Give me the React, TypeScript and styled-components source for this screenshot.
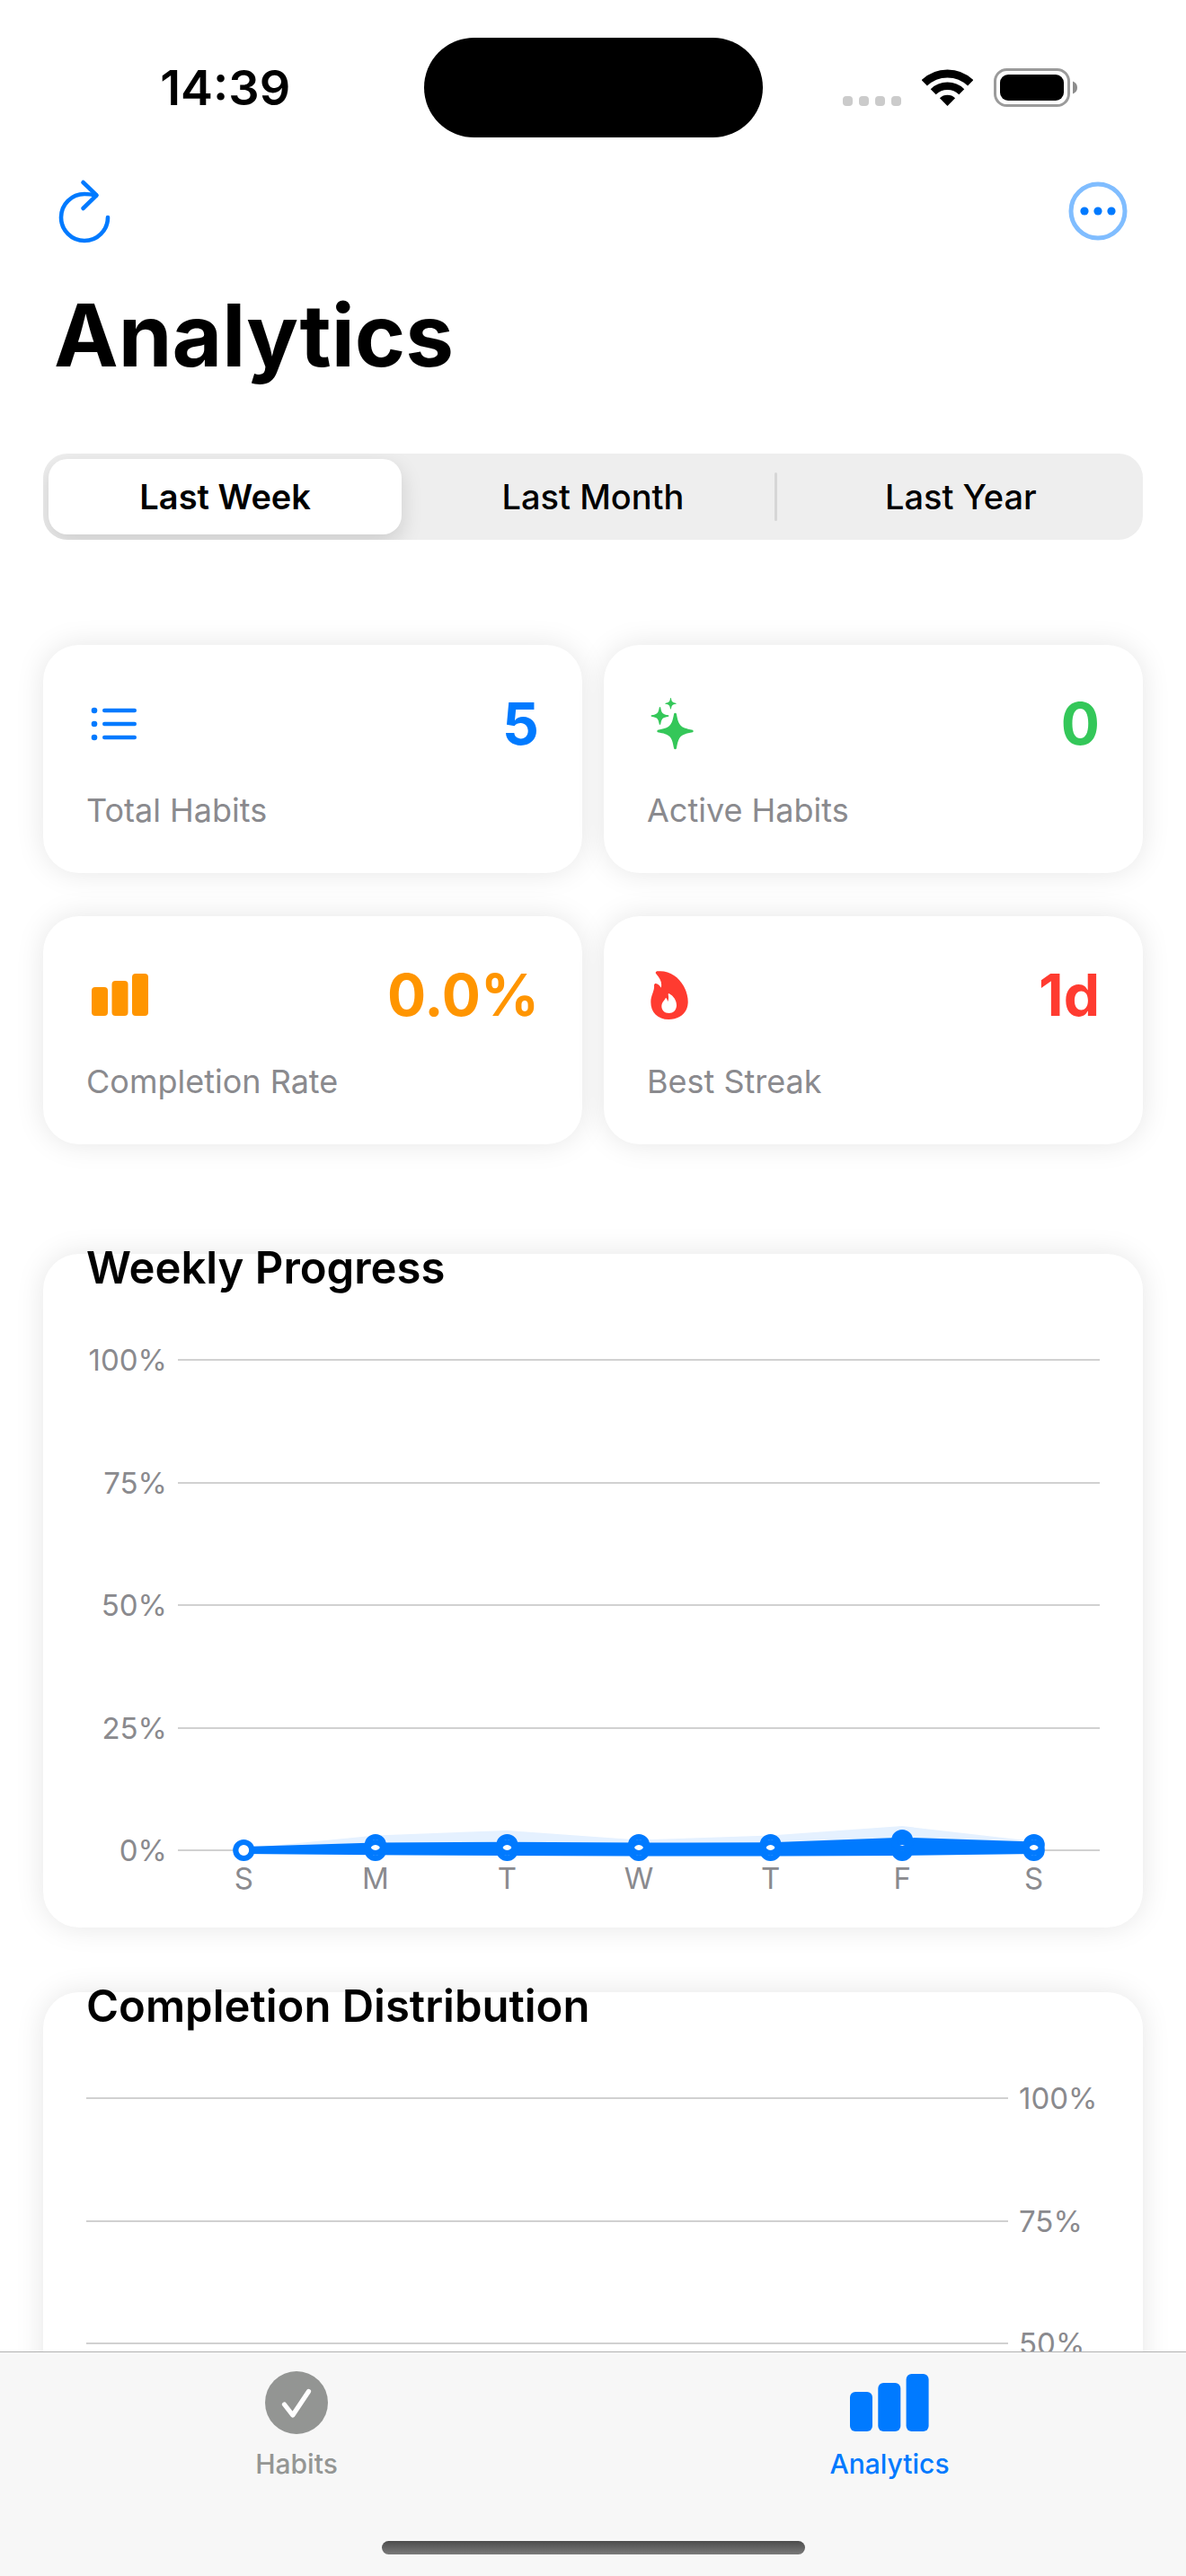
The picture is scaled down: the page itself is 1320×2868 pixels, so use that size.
import React, { useState } from "react";
import styled, { createGlobalStyle } from "styled-components";

const color = {
  blue: "#007aff",
  green: "#34c759",
  orange: "#ff9500",
  red: "#ff3b30",
  grey: "#8a8a8e",
  line: "#d1d1d1",
};

const GlobalStyle = createGlobalStyle`
  *, *::before, *::after { box-sizing: border-box; }
  body {
    margin: 0;
    background: #ffffff;
    color: #000000;
    font-family: Inter, "Liberation Sans", sans-serif;
  }
  h1, h2, p { margin: 0; }
  button {
    border: 0;
    margin: 0;
    padding: 0;
    background: none;
    color: inherit;
    font: inherit;
    cursor: pointer;
  }
  svg { display: block; flex: none; }
`;

const Screen = styled.div`
  display: flex;
  flex-direction: column;
  height: 100vh;
`;

const StatusBar = styled.header`
  display: grid;
  grid-template-columns: 1fr 377px 1fr;
  align-items: center;
  flex: none;
  height: 177px;
  padding-top: 18px;
`;

const Clock = styled.time`
  padding-left: 30px;
  text-align: center;
  font-size: 54px;
  line-height: 60px;
  font-weight: 600;
`;

const Island = styled.div`
  height: 111px;
  border-radius: 56px;
  background: #000000;
`;

const StatusIcons = styled.div`
  display: flex;
  justify-content: center;
  align-items: center;
  gap: 23px;
  padding-right: 32px;
`;

const Content = styled.main`
  flex: 1;
  min-height: 0;
  overflow: hidden;
  padding: 0 48px;
`;

const NavRow = styled.div`
  display: flex;
  justify-content: space-between;
  align-items: center;
  height: 116px;
  padding: 0 16px;
`;

const IconButton = styled.button`
  display: flex;
  color: ${color.blue};
`;

const Title = styled.h1`
  margin-top: 20px;
  padding-left: 12px;
  font-size: 96px;
  line-height: 120px;
  font-weight: 700;
`;

const Segments = styled.div`
  display: flex;
  align-items: center;
  height: 96px;
  margin-top: 72px;
  padding: 6px;
  border-radius: 27px;
  background: #eeeeee;
  overflow: hidden;
`;

const Segment = styled.button<{ $selected: boolean }>`
  flex: 1;
  height: 84px;
  border-radius: 21px;
  font-size: 38px;
  line-height: 48px;
  font-weight: ${(p) => (p.$selected ? 600 : 500)};
  background: ${(p) => (p.$selected ? "#ffffff" : "transparent")};
  box-shadow: ${(p) => (p.$selected ? "0 9px 24px rgba(0, 0, 0, 0.14)" : "none")};
`;

const Divider = styled.span<{ $visible: boolean }>`
  width: 3px;
  height: 54px;
  margin: 0 8px 0 5px;
  border-radius: 2px;
  background: ${(p) => (p.$visible ? "#d6d6d6" : "transparent")};
`;

const Card = styled.section`
  border-radius: 40px;
  background: #ffffff;
  box-shadow: 0 0 32px rgba(0, 0, 0, 0.1);
`;

const StatGrid = styled.div`
  display: grid;
  grid-template-columns: 1fr 1fr;
  gap: 48px 24px;
  margin-top: 117px;
`;

const StatCard = styled(Card)`
  padding: 48px;
`;

const StatTop = styled.div<{ $tint: string }>`
  display: flex;
  justify-content: space-between;
  align-items: center;
  color: ${(p) => p.$tint};
`;

const StatValue = styled.strong`
  font-size: 64px;
  line-height: 79px;
  font-weight: 700;
`;

const StatLabel = styled.p`
  margin-top: 36px;
  font-size: 36px;
  line-height: 43px;
  color: ${color.grey};
`;

const ChartList = styled.div`
  display: grid;
  gap: 72px;
  margin-top: 122px;
`;

const ChartCard = styled(Card)`
  min-height: 750px;
  padding: 0 48px 35px;
`;

const ChartTitle = styled.h2`
  margin: -14px 0 61px;
  font-size: 49px;
  line-height: 60px;
  font-weight: 600;
`;

const ChartRow = styled.div`
  display: flex;
  gap: 12px;
`;

const Ticks = styled.div<{ $align: "left" | "right" }>`
  display: flex;
  flex-direction: column;
  justify-content: space-between;
  flex: none;
  width: 90px;
  font-size: 33px;
  line-height: 22px;
  text-align: ${(p) => p.$align};
  white-space: nowrap;
  color: ${color.grey};
`;

const Plot = styled.div`
  flex: 1;
  min-width: 0;
`;

const PlotSvg = styled.svg`
  width: 100%;
  overflow: visible;
`;

const DayLabels = styled.div`
  display: grid;
  grid-template-columns: repeat(7, 1fr);
  text-align: center;
  font-size: 33px;
  line-height: 40px;
  color: ${color.grey};
`;

const TabBar = styled.footer`
  flex: none;
  height: 250px;
  border-top: 1px solid #b2b2b2;
  background: #f7f7f7;
`;

const Tabs = styled.nav`
  display: grid;
  grid-template-columns: 1fr 1fr;
  padding-top: 21px;
`;

const Tab = styled.button<{ $active: boolean }>`
  display: flex;
  flex-direction: column;
  align-items: center;
  gap: 15px;
  font-size: 30px;
  line-height: 36px;
  font-weight: 500;
  color: ${(p) => (p.$active ? color.blue : "#949694")};
`;

const HomeIndicator = styled.div`
  width: 471px;
  height: 15px;
  margin: 68px auto 0;
  border-radius: 8px;
  background: linear-gradient(#4c4c4c, #7a7a7a);
`;

const SignalIcon = () => (
  <svg width="65" height="43" viewBox="0 0 65 43" fill="#cbcbcb" aria-hidden="true">
    {[0, 18, 36, 54].map((x) => (
      <rect key={x} x={x} y="31" width="11" height="11" rx="4" />
    ))}
  </svg>
);

const WifiIcon = () => (
  <svg width="57" height="43" viewBox="0 0 57 43" aria-hidden="true">
    <g fill="none" stroke="#000000">
      <path d="M2.8 16.3A37 37 0 0 1 54.2 16.3" strokeWidth="9" />
      <path d="M12.7 26.2A22.7 22.7 0 0 1 44.3 26.2" strokeWidth="8.5" />
    </g>
    <path d="M28.5 42L19.9 33.2A12.4 12.4 0 0 1 37.1 33.2Z" />
  </svg>
);

const BatteryIcon = () => (
  <svg width="93" height="43" viewBox="0 0 93 43" aria-hidden="true">
    <rect x="1.5" y="1.5" width="82" height="40" rx="13" fill="none" stroke="#9b9b9b" strokeWidth="3" />
    <rect x="7" y="7" width="71" height="29" rx="9" />
    <path d="M88 14.5Q93 16.500 93 21.500T88 28.500Z" fill="#8c8c8c" />
  </svg>
);

const RefreshIcon = () => (
  <svg
    width="60"
    height="80"
    viewBox="0 0 60 80"
    fill="none"
    stroke="currentColor"
    strokeWidth="4.6"
    strokeLinecap="round"
    strokeLinejoin="round"
    aria-hidden="true"
  >
    <path d="M56 47A26 26 0 1 1 30 21Q36 21 43 22.500" />
    <path d="M28.500 8L43.500 22.400L28.500 37" />
  </svg>
);

const MoreIcon = () => (
  <svg width="68" height="68" viewBox="0 0 68 68" fill="currentColor" aria-hidden="true">
    <circle cx="34" cy="34" r="30" fill="none" stroke="#80bdff" strokeWidth="5" />
    <circle cx="19" cy="34" r="4.600" />
    <circle cx="34" cy="34" r="4.600" />
    <circle cx="49" cy="34" r="4.600" />
  </svg>
);

const ListIcon = () => (
  <svg width="72" height="66" viewBox="0 0 72 66" fill="currentColor" aria-hidden="true">
    {[18, 33, 48].map((y) => (
      <g key={y}>
        <circle cx="9" cy={y} r="3.300" />
        <rect x="18" y={y - 2.3} width="38" height="4.600" rx="2.300" />
      </g>
    ))}
  </svg>
);

const star = (cx: number, cy: number, r: number) => {
  const k = r * 0.3;
  const t = r * 0.07;
  return [
    `M${cx - t} ${cy - r}Q${cx} ${cy - r - t} ${cx + t} ${cy - r}`,
    `C${cx + t + r * 0.12} ${cy - k} ${cx + k} ${cy - t - r * 0.12} ${cx + r} ${cy - t}`,
    `Q${cx + r + t} ${cy} ${cx + r} ${cy + t}`,
    `C${cx + k} ${cy + t + r * 0.12} ${cx + t + r * 0.12} ${cy + k} ${cx + t} ${cy + r}`,
    `Q${cx} ${cy + r + t} ${cx - t} ${cy + r}`,
    `C${cx - t - r * 0.12} ${cy + k} ${cx - k} ${cy + t + r * 0.12} ${cx - r} ${cy + t}`,
    `Q${cx - r - t} ${cy} ${cx - r} ${cy - t}`,
    `C${cx - k} ${cy - t - r * 0.12} ${cx - t - r * 0.12} ${cy - k} ${cx - t} ${cy - r}Z`,
  ].join("");
};

const SparklesIcon = () => (
  <svg width="72" height="66" viewBox="0 0 72 66" fill="currentColor" aria-hidden="true">
    <path d={star(31.5, 41, 19.5)} />
    <path d={star(14.5, 24, 9.6)} />
    <path d={star(26.5, 10.3, 6)} />
  </svg>
);

const BarsIcon = () => (
  <svg width="72" height="66" viewBox="0 0 72 66" fill="currentColor" aria-hidden="true">
    <rect x="6" y="24" width="18" height="32" rx="4" />
    <rect x="28.500" y="17" width="18" height="39" rx="4" />
    <rect x="51" y="9" width="18" height="47" rx="4" />
  </svg>
);

const FlameIcon = () => (
  <svg width="72" height="66" viewBox="60 15 216 198" fill="currentColor" aria-hidden="true">
    <path
      fillRule="evenodd"
      d="M97 34C135 31 165 52 183 84C193 103 198 122 197 140C195 175 168 195 133 195C95 195 73 170 73 137C73 112 86 102 84 80C85 74 91 74 96 77C101 80 104 84 107 89C112 73 104 58 91 43C87 38 90 34 97 34ZM133 108C151 117 160 135 159 150C157 166 148 174 134 174C118 174 109 164 109 150C110 136 120 131 123 122C127 126 129 130 129 136C134 127 132 118 131 110Z"
    />
  </svg>
);

const CheckIcon = () => (
  <svg width="70" height="70" viewBox="0 0 70 70" aria-hidden="true">
    <circle cx="35" cy="35" r="35" fill="#939593" />
    <path
      d="M21.500 37L30.800 49L48.500 22.500"
      fill="none"
      stroke="#ffffff"
      strokeWidth="5.200"
      strokeLinecap="round"
      strokeLinejoin="round"
    />
  </svg>
);

const TabBarsIcon = () => (
  <svg width="88" height="70" viewBox="0 0 88 70" fill="currentColor" aria-hidden="true">
    <rect x="0" y="23" width="25" height="44" rx="6" />
    <rect x="31.300" y="13" width="25" height="54" rx="6" />
    <rect x="62.600" y="3" width="25" height="64" rx="6" />
  </svg>
);

const periods = ["Last Week", "Last Month", "Last Year"];

const stats = [
  { label: "Total Habits", value: "5", tint: color.blue, Icon: ListIcon },
  { label: "Active Habits", value: "0", tint: color.green, Icon: SparklesIcon },
  { label: "Completion Rate", value: "0.0%", tint: color.orange, Icon: BarsIcon },
  { label: "Best Streak", value: "1d", tint: color.red, Icon: FlameIcon },
];

/* Distances in pixels above the 0% line, one entry per weekday */
const week = [
  { day: "S", markers: [0], area: 2, top: 4, bottom: -4 },
  { day: "M", markers: [0, 6], area: 16.5, top: 8.5, bottom: -5.3 },
  { day: "T", markers: [0, 6], area: 22, top: 9.3, bottom: -6 },
  { day: "W", markers: [0, 6], area: 11.5, top: 8.5, bottom: -6.5 },
  { day: "T", markers: [0, 6], area: 16.5, top: 8.8, bottom: -6.5 },
  { day: "F", markers: [0, 5.5, 11], area: 27, top: 14.3, bottom: -6 },
  { day: "S", markers: [0, 6], area: 10, top: 9.5, bottom: -4 },
];

const PLOT_WIDTH = 1026;
const STEP = 136.5;
const EDGE = 11;

const GridLines = ({ count }: { count: number }) => (
  <g stroke={color.line} strokeWidth="2">
    {Array.from({ length: count }, (_, i) => (
      <line key={i} x1="0" x2={PLOT_WIDTH} y1={Math.round(EDGE + i * STEP)} y2={Math.round(EDGE + i * STEP)} />
    ))}
  </g>
);

const WeeklyPlot = () => {
  const base = EDGE + 4 * STEP;
  const x = (i: number) => (PLOT_WIDTH / 7) * (i + 0.5);
  const edge = (key: "area" | "top" | "bottom") => week.map((d, i) => `${x(i)},${base - d[key]}`);
  return (
    <PlotSvg
      height="568"
      viewBox={`0 0 ${PLOT_WIDTH} 568`}
      preserveAspectRatio="none"
      role="img"
      aria-label="Weekly Progress"
    >
      <GridLines count={5} />
      <polygon points={[...edge("area"), ...edge("bottom").reverse()].join(" ")} fill="#e5f1ff" />
      <polygon points={[...edge("top"), ...edge("bottom").reverse()].join(" ")} fill={color.blue} />
      {week.map((d, i) => (
        <g key={i}>
          {d.markers.map((m) => (
            <circle key={m} cx={x(i)} cy={base - m} r="7" fill="#ffffff" />
          ))}
          {d.markers.map((m) => (
            <circle
              key={m}
              cx={x(i)}
              cy={base - m}
              r="9"
              fill="none"
              stroke={color.blue}
              strokeWidth="6.200"
            />
          ))}
        </g>
      ))}
    </PlotSvg>
  );
};

export default function App() {
  const [period, setPeriod] = useState(0);

  return (
    <Screen>
      <GlobalStyle />
      <StatusBar>
        <Clock>14:39</Clock>
        <Island />
        <StatusIcons>
          <SignalIcon />
          <WifiIcon />
          <BatteryIcon />
        </StatusIcons>
      </StatusBar>

      <Content>
        <NavRow>
          <IconButton aria-label="Refresh">
            <RefreshIcon />
          </IconButton>
          <IconButton aria-label="More">
            <MoreIcon />
          </IconButton>
        </NavRow>
        <Title>Analytics</Title>

        <Segments>
          {periods.map((name, i) => (
            <React.Fragment key={name}>
              {i > 0 && <Divider $visible={period !== i && period !== i - 1} />}
              <Segment $selected={period === i} aria-pressed={period === i} onClick={() => setPeriod(i)}>
                {name}
              </Segment>
            </React.Fragment>
          ))}
        </Segments>

        <StatGrid>
          {stats.map(({ label, value, tint, Icon }) => (
            <StatCard key={label}>
              <StatTop $tint={tint}>
                <Icon />
                <StatValue>{value}</StatValue>
              </StatTop>
              <StatLabel>{label}</StatLabel>
            </StatCard>
          ))}
        </StatGrid>

        <ChartList>
          <ChartCard>
            <ChartTitle>Weekly Progress</ChartTitle>
            <ChartRow>
              <Ticks $align="right">
                {["100%", "75%", "50%", "25%", "0%"].map((t) => (
                  <span key={t}>{t}</span>
                ))}
              </Ticks>
              <Plot>
                <WeeklyPlot />
              </Plot>
            </ChartRow>
            <ChartRow>
              <Ticks $align="right" />
              <Plot>
                <DayLabels>
                  {week.map((d, i) => (
                    <span key={i}>{d.day}</span>
                  ))}
                </DayLabels>
              </Plot>
            </ChartRow>
          </ChartCard>

          <ChartCard>
            <ChartTitle>Completion Distribution</ChartTitle>
            <ChartRow>
              <Plot>
                <PlotSvg height="295" viewBox={`0 0 ${PLOT_WIDTH} 295`} preserveAspectRatio="none" aria-hidden="true">
                  <GridLines count={3} />
                </PlotSvg>
              </Plot>
              <Ticks $align="left">
                {["100%", "75%", "50%"].map((t) => (
                  <span key={t}>{t}</span>
                ))}
              </Ticks>
            </ChartRow>
          </ChartCard>
        </ChartList>
      </Content>

      <TabBar>
        <Tabs>
          <Tab $active={false}>
            <CheckIcon />
            Habits
          </Tab>
          <Tab $active aria-current="page">
            <TabBarsIcon />
            Analytics
          </Tab>
        </Tabs>
        <HomeIndicator />
      </TabBar>
    </Screen>
  );
}
